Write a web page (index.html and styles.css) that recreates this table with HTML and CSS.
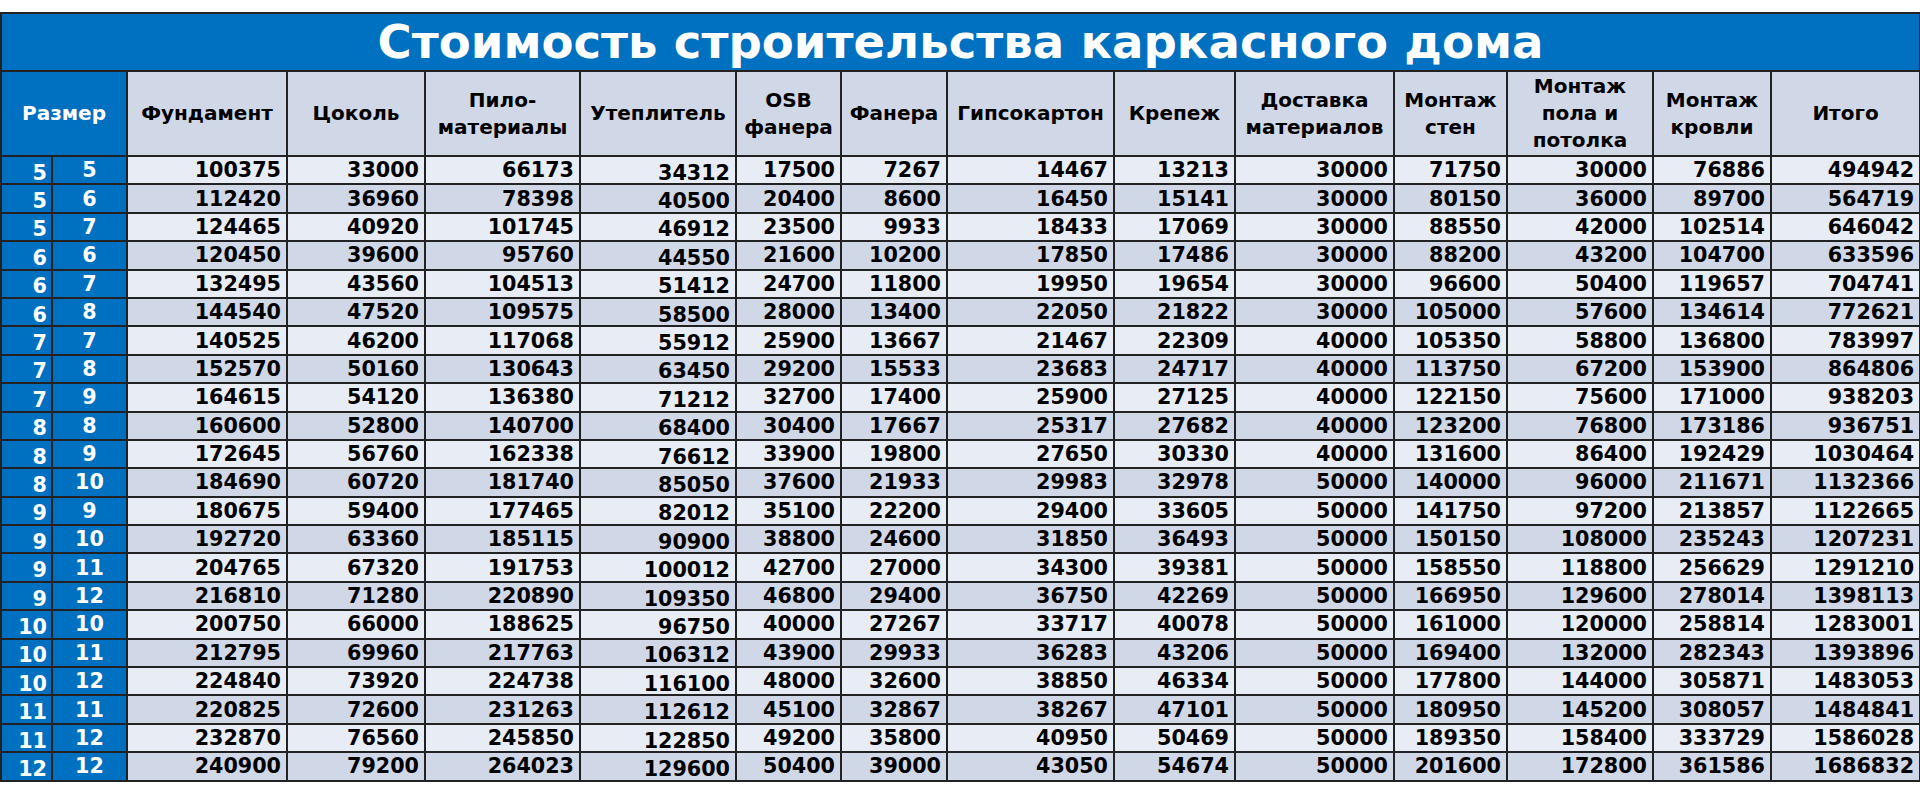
FILE: index.html
```html
<!DOCTYPE html>
<html lang="ru">
<head>
<meta charset="utf-8">
<title>Стоимость строительства каркасного дома</title>
<link rel="stylesheet" href="styles.css">
</head>
<body>
<table class="price" id="price">
  <colgroup>
    <col class="w51"><col class="w75"><col class="w160"><col class="w138"><col class="w155"><col class="w156"><col class="w105"><col class="w106"><col class="w167"><col class="w121"><col class="w159"><col class="w113"><col class="w146"><col class="w118"><col class="w149">
  </colgroup>
  <thead>
    <tr class="title-row"><th colspan="15" class="title">Стоимость строительства каркасного дома</th></tr>
    <tr class="head-row">
      <th colspan="2" class="size-head">Размер</th>
      <th>Фундамент</th>
      <th>Цоколь</th>
      <th>Пило-<br>материалы</th>
      <th>Утеплитель</th>
      <th>OSB<br>фанера</th>
      <th>Фанера</th>
      <th>Гипсокартон</th>
      <th>Крепеж</th>
      <th>Доставка<br>материалов</th>
      <th>Монтаж<br>стен</th>
      <th>Монтаж<br>пола и<br>потолка</th>
      <th>Монтаж<br>кровли</th>
      <th>Итого</th>
    </tr>
  </thead>
  <tbody>
<tr><td class="a">5</td><td class="b">5</td><td>100375</td><td>33000</td><td>66173</td><td class="low">34312</td><td>17500</td><td>7267</td><td>14467</td><td>13213</td><td>30000</td><td>71750</td><td>30000</td><td>76886</td><td>494942</td></tr>
<tr><td class="a">5</td><td class="b">6</td><td>112420</td><td>36960</td><td>78398</td><td class="low">40500</td><td>20400</td><td>8600</td><td>16450</td><td>15141</td><td>30000</td><td>80150</td><td>36000</td><td>89700</td><td>564719</td></tr>
<tr><td class="a">5</td><td class="b">7</td><td>124465</td><td>40920</td><td>101745</td><td class="low">46912</td><td>23500</td><td>9933</td><td>18433</td><td>17069</td><td>30000</td><td>88550</td><td>42000</td><td>102514</td><td>646042</td></tr>
<tr><td class="a">6</td><td class="b">6</td><td>120450</td><td>39600</td><td>95760</td><td class="low">44550</td><td>21600</td><td>10200</td><td>17850</td><td>17486</td><td>30000</td><td>88200</td><td>43200</td><td>104700</td><td>633596</td></tr>
<tr><td class="a">6</td><td class="b">7</td><td>132495</td><td>43560</td><td>104513</td><td class="low">51412</td><td>24700</td><td>11800</td><td>19950</td><td>19654</td><td>30000</td><td>96600</td><td>50400</td><td>119657</td><td>704741</td></tr>
<tr><td class="a">6</td><td class="b">8</td><td>144540</td><td>47520</td><td>109575</td><td class="low">58500</td><td>28000</td><td>13400</td><td>22050</td><td>21822</td><td>30000</td><td>105000</td><td>57600</td><td>134614</td><td>772621</td></tr>
<tr><td class="a">7</td><td class="b">7</td><td>140525</td><td>46200</td><td>117068</td><td class="low">55912</td><td>25900</td><td>13667</td><td>21467</td><td>22309</td><td>40000</td><td>105350</td><td>58800</td><td>136800</td><td>783997</td></tr>
<tr><td class="a">7</td><td class="b">8</td><td>152570</td><td>50160</td><td>130643</td><td class="low">63450</td><td>29200</td><td>15533</td><td>23683</td><td>24717</td><td>40000</td><td>113750</td><td>67200</td><td>153900</td><td>864806</td></tr>
<tr><td class="a">7</td><td class="b">9</td><td>164615</td><td>54120</td><td>136380</td><td class="low">71212</td><td>32700</td><td>17400</td><td>25900</td><td>27125</td><td>40000</td><td>122150</td><td>75600</td><td>171000</td><td>938203</td></tr>
<tr><td class="a">8</td><td class="b">8</td><td>160600</td><td>52800</td><td>140700</td><td class="low">68400</td><td>30400</td><td>17667</td><td>25317</td><td>27682</td><td>40000</td><td>123200</td><td>76800</td><td>173186</td><td>936751</td></tr>
<tr><td class="a">8</td><td class="b">9</td><td>172645</td><td>56760</td><td>162338</td><td class="low">76612</td><td>33900</td><td>19800</td><td>27650</td><td>30330</td><td>40000</td><td>131600</td><td>86400</td><td>192429</td><td>1030464</td></tr>
<tr><td class="a">8</td><td class="b">10</td><td>184690</td><td>60720</td><td>181740</td><td class="low">85050</td><td>37600</td><td>21933</td><td>29983</td><td>32978</td><td>50000</td><td>140000</td><td>96000</td><td>211671</td><td>1132366</td></tr>
<tr><td class="a">9</td><td class="b">9</td><td>180675</td><td>59400</td><td>177465</td><td class="low">82012</td><td>35100</td><td>22200</td><td>29400</td><td>33605</td><td>50000</td><td>141750</td><td>97200</td><td>213857</td><td>1122665</td></tr>
<tr><td class="a">9</td><td class="b">10</td><td>192720</td><td>63360</td><td>185115</td><td class="low">90900</td><td>38800</td><td>24600</td><td>31850</td><td>36493</td><td>50000</td><td>150150</td><td>108000</td><td>235243</td><td>1207231</td></tr>
<tr><td class="a">9</td><td class="b">11</td><td>204765</td><td>67320</td><td>191753</td><td class="low">100012</td><td>42700</td><td>27000</td><td>34300</td><td>39381</td><td>50000</td><td>158550</td><td>118800</td><td>256629</td><td>1291210</td></tr>
<tr><td class="a">9</td><td class="b">12</td><td>216810</td><td>71280</td><td>220890</td><td class="low">109350</td><td>46800</td><td>29400</td><td>36750</td><td>42269</td><td>50000</td><td>166950</td><td>129600</td><td>278014</td><td>1398113</td></tr>
<tr><td class="a">10</td><td class="b">10</td><td>200750</td><td>66000</td><td>188625</td><td class="low">96750</td><td>40000</td><td>27267</td><td>33717</td><td>40078</td><td>50000</td><td>161000</td><td>120000</td><td>258814</td><td>1283001</td></tr>
<tr><td class="a">10</td><td class="b">11</td><td>212795</td><td>69960</td><td>217763</td><td class="low">106312</td><td>43900</td><td>29933</td><td>36283</td><td>43206</td><td>50000</td><td>169400</td><td>132000</td><td>282343</td><td>1393896</td></tr>
<tr><td class="a">10</td><td class="b">12</td><td>224840</td><td>73920</td><td>224738</td><td class="low">116100</td><td>48000</td><td>32600</td><td>38850</td><td>46334</td><td>50000</td><td>177800</td><td>144000</td><td>305871</td><td>1483053</td></tr>
<tr><td class="a">11</td><td class="b">11</td><td>220825</td><td>72600</td><td>231263</td><td class="low">112612</td><td>45100</td><td>32867</td><td>38267</td><td>47101</td><td>50000</td><td>180950</td><td>145200</td><td>308057</td><td>1484841</td></tr>
<tr><td class="a">11</td><td class="b">12</td><td>232870</td><td>76560</td><td>245850</td><td class="low">122850</td><td>49200</td><td>35800</td><td>40950</td><td>50469</td><td>50000</td><td>189350</td><td>158400</td><td>333729</td><td>1586028</td></tr>
<tr><td class="a">12</td><td class="b">12</td><td>240900</td><td>79200</td><td>264023</td><td class="low">129600</td><td>50400</td><td>39000</td><td>43050</td><td>54674</td><td>50000</td><td>201600</td><td>172800</td><td>361586</td><td>1686832</td></tr>
  </tbody>
</table>
</body>
</html>
```

FILE: styles.css
```css
html, body {
  margin: 0;
  padding: 0;
  background: #ffffff;
}
body {
  padding-top: 12px;
  font-family: "DejaVu Sans", Verdana, sans-serif;
  font-weight: bold;
  color: #000;
}
.price {
  width: 1920px;
  table-layout: fixed;
  border-collapse: collapse;
  border: 2px solid #222;
}
.w51 { width: 51px; }
.w75 { width: 75px; }
.w160 { width: 160px; }
.w138 { width: 138px; }
.w155 { width: 155px; }
.w156 { width: 156px; }
.w105 { width: 105px; }
.w106 { width: 106px; }
.w167 { width: 167px; }
.w121 { width: 121px; }
.w159 { width: 159px; }
.w113 { width: 113px; }
.w146 { width: 146px; }
.w118 { width: 118px; }
.w149 { width: 149px; }

.price th, .price td {
  border: 2px solid #222;
  padding: 0;
  overflow: hidden;
  white-space: nowrap;
}
.title-row { height: 58px; }
.title {
  background: #0070c0;
  color: #fff;
  font-size: 46.6px;
  line-height: 52px;
  text-align: center;
  vertical-align: middle;
}
.head-row { height: 85px; }
.head-row th {
  background: #d0d7e6;
  font-size: 20px;
  line-height: 27px;
  text-align: center;
  vertical-align: middle;
}
.head-row th.size-head {
  background: #0070c0;
  color: #fff;
}
.price tbody tr { height: 28.4px; }
.price tbody td {
  font-size: 20.7px;
  line-height: 20px;
  text-align: right;
  padding-right: 5px;
  vertical-align: middle;
  background: #e8ecf4;
}
.price tbody tr:nth-child(even) td { background: #d0d7e6; }
.price tbody td.a,
.price tbody td.b,
.price tbody tr:nth-child(even) td.a,
.price tbody tr:nth-child(even) td.b {
  background: #0070c0;
  color: #fff;
}
.price tbody td.a { padding-top: 5px; padding-right: 4px; }
.price tbody td.b { text-align: center; padding-right: 0; }
.price tbody td.low { padding-top: 5px; }
```
